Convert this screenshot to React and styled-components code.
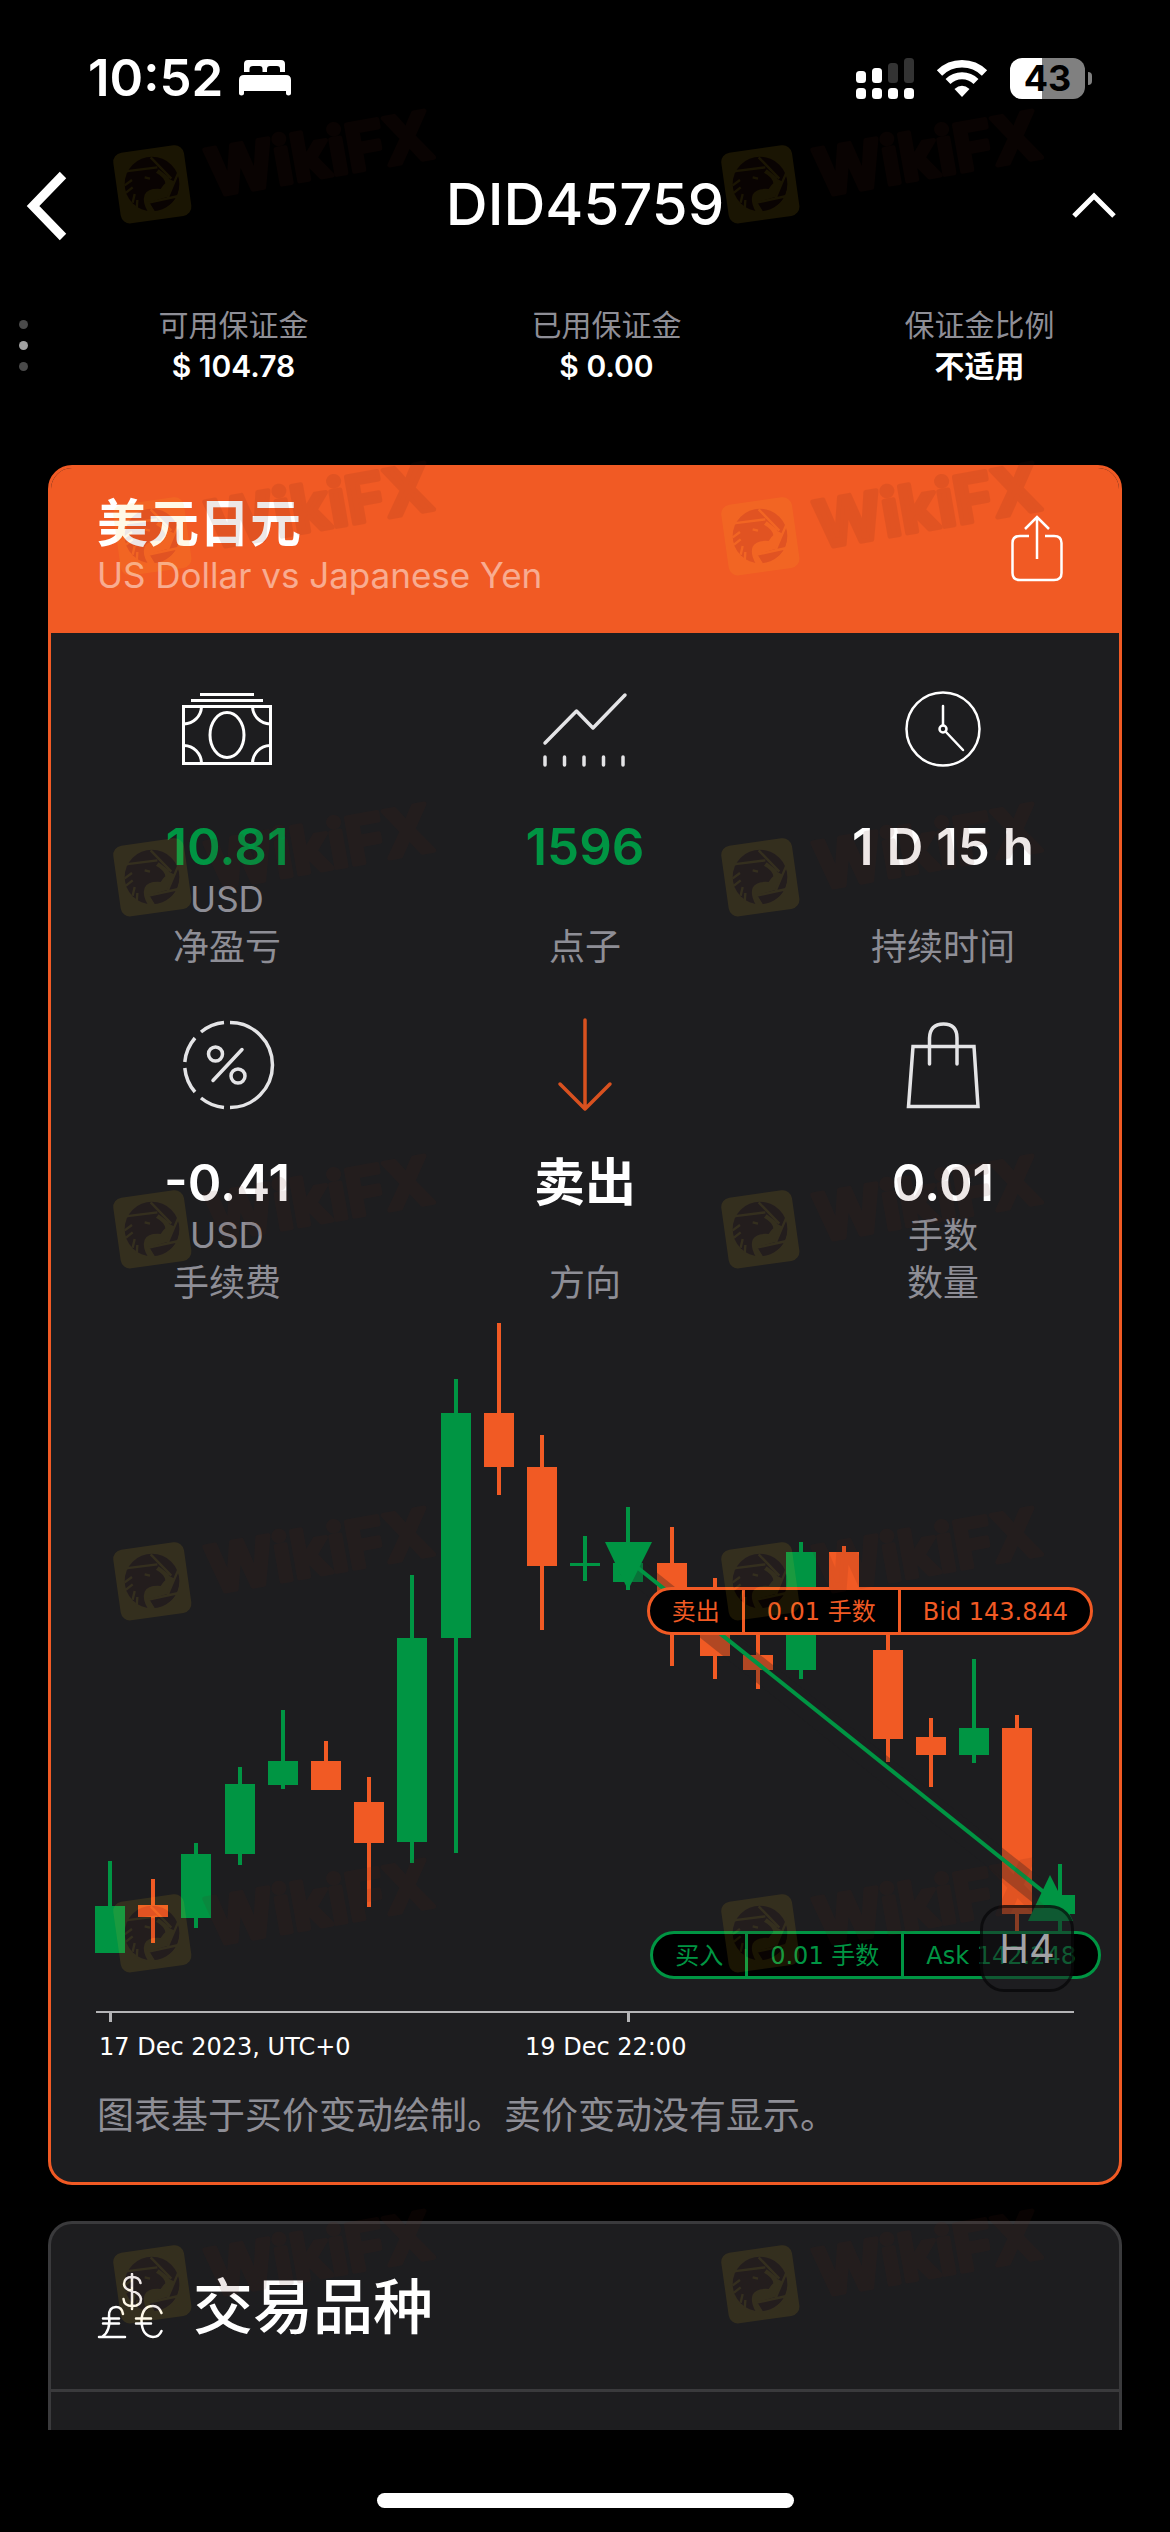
import React from "react";
import styled, { createGlobalStyle } from "styled-components";

const GREEN = "#009543";
const ORANGE = "#f15a24";
const PANEL = "#1d1d1f";
const GREY = "#8e8e96";
const LINE = "#3a3a3c";

const GlobalStyle = createGlobalStyle`
  *, *::before, *::after { box-sizing: border-box; }
  body { margin: 0; background: #000; }
  button { border: 0; padding: 0; background: none; color: inherit; font: inherit; cursor: pointer; }
  svg { display: block; }
  p, h1, h2, dl, dd { margin: 0; }
`;

const Page = styled.div`
  position: relative;
  display: flex;
  flex-direction: column;
  min-height: 100vh;
  overflow: hidden;
  background: #000;
  color: #fff;
  font-family: Inter, "Noto Sans CJK SC", sans-serif;
`;

const StatusBar = styled.div`
  display: flex;
  align-items: center;
  justify-content: space-between;
  padding: 48px 78px 38px 88px;
`;

const StatusGroup = styled.div`
  display: flex;
  align-items: center;
  gap: ${(p) => p.$gap}px;
  height: 60px;
`;

const Clock = styled.time`
  font-size: 51px;
  font-weight: 600;
  line-height: 60px;
`;

const Battery = styled.div`
  display: flex;
  align-items: center;
  gap: 3px;
`;

const BatteryCell = styled.div`
  width: 75px;
  height: 41px;
  border-radius: 12px;
  background: linear-gradient(90deg, #fff 43%, #808080 43%);
  color: #000;
  font-size: 36px;
  font-weight: 700;
  line-height: 41px;
  text-align: center;
`;

const BatteryTip = styled.span`
  width: 4px;
  height: 13px;
  border-radius: 0 6px 6px 0;
  background: #808080;
`;

const NavBar = styled.header`
  display: grid;
  grid-template-columns: 100px 1fr 100px;
  align-items: center;
  height: 120px;
  padding: 0 22px;
`;

const NavButton = styled.button`
  justify-self: ${(p) => p.$side};
  padding-right: ${(p) => (p.$side === "end" ? 30 : 0)}px;
`;

const NavTitle = styled.h1`
  padding-bottom: 4px;
  font-size: 58px;
  font-weight: 500;
  line-height: 72px;
  text-align: center;
`;

const Summary = styled.section`
  display: flex;
  padding: 38px 4px 79px 0;
`;

const Dots = styled.div`
  display: flex;
  flex-direction: column;
  align-items: center;
  gap: 12px;
  width: 47px;
  padding-top: 16px;
`;

const Dot = styled.span`
  width: 9px;
  height: 9px;
  border-radius: 50%;
  background: ${(p) => (p.$active ? "#a0a0a0" : "#4a4a4a")};
`;

const SummaryList = styled.dl`
  display: grid;
  flex: 1;
  grid-template-columns: repeat(3, 1fr);
  text-align: center;
`;

const SummaryLabel = styled.dt`
  color: ${GREY};
  font-size: 30px;
  line-height: 42px;
`;

const SummaryValue = styled.dd`
  font-size: 30px;
  font-weight: 600;
  line-height: 40px;
`;

const Card = styled.section`
  margin: 0 48px;
  overflow: hidden;
  border: 3px solid ${(p) => p.$color};
  border-bottom-width: ${(p) => (p.$open ? 0 : 3)}px;
  border-radius: ${(p) => (p.$open ? "24px 24px 0 0" : "24px")};
  background: ${PANEL};
`;

const CardHeader = styled.div`
  display: flex;
  justify-content: space-between;
  padding: 27px 56px 36px 46px;
  background: ${ORANGE};
`;

const CardTitle = styled.h2`
  font-size: 51px;
  font-weight: 700;
  line-height: 58px;
`;

const CardSubtitle = styled.p`
  color: rgba(255, 255, 255, 0.5);
  font-size: 35px;
  line-height: 44px;
`;

const ShareButton = styled.button`
  align-self: flex-start;
  padding-top: 19px;
`;

const Stats = styled.dl`
  display: grid;
  grid-template-columns: repeat(3, 1fr);
  row-gap: 44px;
  margin: 0 -3px;
  padding-top: 46px;
`;

const Stat = styled.div`
  display: flex;
  flex-direction: column;
  align-items: center;
  text-align: center;
`;

const StatIcon = styled.div`
  height: 100px;
  margin-bottom: 40px;
`;

const StatValue = styled.dd`
  color: ${(p) => p.$color || "#fff"};
  font-size: 51px;
  font-weight: 600;
  line-height: 56px;
`;

const StatNote = styled.dd`
  height: 48px;
  color: ${GREY};
  font-size: 35px;
  line-height: 48px;
`;

const StatLabel = styled.dt`
  order: 1;
  color: ${GREY};
  font-size: 36px;
  line-height: 48px;
`;

const ChartArea = styled.div`
  position: relative;

  & > svg { width: 100%; height: auto; }
`;

const OrderPill = styled.div`
  position: absolute;
  top: ${(p) => p.$top}px;
  right: ${(p) => p.$right}px;
  display: flex;
  height: 48px;
  overflow: hidden;
  border: 3px solid ${(p) => p.$color};
  border-radius: 24px;
  background: #000;
  color: ${(p) => p.$color};
  font-family: "DejaVu Sans", "Noto Sans CJK SC", sans-serif;
  font-size: 24px;
  line-height: 44px;
  white-space: nowrap;
`;

const PillPart = styled.span`
  padding: 0 22px;

  & + & { border-left: 3px solid currentColor; }
`;

const PeriodButton = styled.button`
  position: absolute;
  top: 598px;
  right: 45px;
  width: 94px;
  height: 87px;
  border: 3px solid rgba(0, 0, 0, 0.55);
  border-radius: 24px;
  background: rgba(29, 29, 33, 0.5);
  color: #a2a2a6;
  font-size: 40px;
`;

const ChartNote = styled.p`
  padding: 0 46px 42px;
  color: ${GREY};
  font-size: 37px;
  line-height: 48px;
`;

const SymbolHeader = styled.div`
  display: flex;
  align-items: center;
  gap: 28px;
  height: 168px;
  padding: 0 46px;
  border-bottom: 3px solid ${LINE};
`;

const SymbolTitle = styled.h2`
  font-size: 60px;
  font-weight: 500;
  line-height: 72px;
`;

const SymbolBody = styled.div`
  height: 38px;
`;

const Spacer = styled.div`
  height: 36px;
`;

const Footer = styled.footer`
  display: flex;
  justify-content: center;
  margin-top: auto;
  padding: 63px 0 24px;
`;

const HomeIndicator = styled.span`
  width: 417px;
  height: 15px;
  border-radius: 8px;
  background: #fff;
`;

const WatermarkLayer = styled.div`
  position: absolute;
  inset: 0;
  overflow: hidden;
  pointer-events: none;
`;

const WatermarkTile = styled.svg`
  position: absolute;
  left: ${(p) => p.$x}px;
  top: ${(p) => p.$y}px;
  overflow: visible;
`;

const watermarkRows = [100, 452, 793, 1145, 1497, 1849, 2200];
const watermarkColumns = [100, 708];

function Watermark({ x, y }) {
  return (
    <WatermarkTile $x={x} $y={y} width="350" height="140" viewBox="0 0 1050 420">
      <g opacity="0.1">
        <rect x="50" y="146" width="214" height="214" rx="28" fill="#ffc81e" transform="rotate(-8 157 253)" />
        <circle cx="156" cy="252" r="82" fill="#5a1e14" />
        <path
          d="M176 208 L214 238 L224 244 L200 294 L146 306 L164 336 L144 336 Q126 306 134 284 Q144 264 182 267 L190 256 L196 250 Q194 232 168 218 Z"
          fill="#ffc81e"
        />
        <path
          d="M206 236L226 246L204 290L150 306L168 330Q220 322 234 276Q240 250 230 220Z"
          fill="#5a1e14"
        />
        <path
          d="M76 214 L172 202 M152 172 L214 236 M240 206 L202 296 M236 288 L146 308 M134 232 L150 236 M74 256 L96 240 M78 278 L98 262 M98 308 L104 282 M110 330 L112 300 M142 304 L162 336"
          stroke="#ffc81e"
          strokeWidth="7"
          fill="none"
        />
        <text
          x="334"
          y="290"
          transform="rotate(-10 334 290)"
          fontFamily="Inter, sans-serif"
          fontSize="196"
          fontWeight="700"
          fill="#5a1e14"
          stroke="#5a1e14"
          strokeWidth="14"
          strokeLinejoin="round"
        >
          WikiFX
        </text>
      </g>
    </WatermarkTile>
  );
}

const BedIcon = () => (
  <svg width="52" height="36" viewBox="0 0 52 36" fill="#fff" aria-hidden="true">
    <path d="M5 12V4Q5 0 9 0H42Q46 0 46 4V12H41V9Q41 6 38 6H31Q28 6 28 9V12H23.500V9Q23.500 6 20.500 6H14Q10.500 6 10.500 9V12Z" />
    <path d="M0 20Q0 15 5 15H47Q52 15 52 20V33.500Q52 35.500 49.500 35.500Q47 35.500 47 33.500V31H5V33.500Q5 35.500 2.500 35.500Q0 35.500 0 33.500Z" />
  </svg>
);

const SignalIcon = () => (
  <svg width="58" height="41" viewBox="0 0 58 41" aria-hidden="true">
    {[0, 16, 32, 48].map((x, i) => (
      <g key={x}>
        <rect x={x} y={[13, 10, 5, 0][i]} width="10" height={[12, 15, 20, 25][i]} rx="3.500" fill={i < 2 ? "#fff" : "#333"} />
        <rect x={x} y="30" width="10" height="11" rx="3.500" fill="#fff" />
      </g>
    ))}
  </svg>
);

const WifiIcon = () => (
  <svg width="52" height="38" viewBox="0 0 52 38" aria-hidden="true">
    <path d="M3.500 14 A32 32 0 0 1 48.500 14" fill="none" stroke="#fff" strokeWidth="7.500" />
    <path d="M12 22.500 A20 20 0 0 1 40 22.500" fill="none" stroke="#fff" strokeWidth="7" />
    <path d="M26 38 L18.500 30 Q26 23.500 33.500 30 Z" fill="#fff" />
  </svg>
);

const BackIcon = () => (
  <svg width="48" height="72" viewBox="0 0 48 72" fill="none" stroke="#fff" strokeWidth="9" aria-hidden="true">
    <path d="M41 5 L11 36 L41 67" />
  </svg>
);

const UpIcon = () => (
  <svg width="48" height="30" viewBox="0 0 48 30" fill="none" stroke="#fff" strokeWidth="5" aria-hidden="true">
    <path d="M4 25 L24 5 L44 25" />
  </svg>
);

const ShareIcon = () => (
  <svg width="52" height="68" viewBox="0 0 52 68" fill="none" stroke="#fff" strokeWidth="2.500" aria-hidden="true">
    <path d="M18 22H9Q1.500 22 1.500 29V59Q1.500 66 9 66H43Q50.500 66 50.500 59V29Q50.500 22 43 22H34" />
    <path d="M26 45V3M14 15L26 3L38 15" />
  </svg>
);

const IconFrame = ({ children, stroke = "#e4e4e6", width = 3.5 }) => (
  <svg width="100" height="100" viewBox="0 0 100 100" fill="none" stroke={stroke} strokeWidth={width} strokeLinecap="round" strokeLinejoin="round" aria-hidden="true">
    {children}
  </svg>
);

const CashIcon = () => (
  <IconFrame stroke="#fff" width={3}>
    <g strokeLinecap="butt" strokeLinejoin="miter">
      <path d="M23 15.500H77M14 21.500H86" />
      <rect x="6.500" y="27.500" width="87" height="57" />
      <ellipse cx="50" cy="56" rx="17" ry="22.500" />
      <path d="M24.500 28A18 18 0 0 1 7 45M75.500 28A18 18 0 0 0 93 45M7 66.500A18 18 0 0 1 24.500 84M93 66.500A18 18 0 0 0 75.500 84" />
    </g>
  </IconFrame>
);

const TrendIcon = () => (
  <IconFrame>
    <path d="M10 64L41.500 32L58 49L90 16" />
    <path d="M10 78V86M29.500 78V86M49 78V86M68.500 78V86M88 78V86" />
  </IconFrame>
);

const ClockIcon = () => (
  <IconFrame stroke="#fff" width={2.5}>
    <circle cx="50" cy="50" r="36.500" />
    <circle cx="50" cy="50" r="3.500" />
    <path d="M50 46V27M52.500 52.500L70 71" />
  </IconFrame>
);

const PercentIcon = () => (
  <IconFrame>
    <path d="M53 7.500A42.500 42.500 0 0 1 53 92.500M47 92.500A42.500 42.500 0 0 1 24 83M18 77A42.500 42.500 0 0 1 7.800 53M7.800 47A42.500 42.500 0 0 1 18 23M24 17A42.500 42.500 0 0 1 47 7.500" strokeLinecap="butt" />
    <circle cx="38.500" cy="39" r="7" />
    <circle cx="61" cy="61" r="7" />
    <path d="M65 34.500L36 65.500" />
  </IconFrame>
);

const DownIcon = () => (
  <IconFrame stroke="#d8511f">
    <path d="M50 5V94M25 69L50 94L75 69" />
  </IconFrame>
);

const BagIcon = () => (
  <IconFrame>
    <path d="M20 31.500H81L85 91.500H15.500Z" strokeLinejoin="miter" />
    <path d="M36.500 49V23Q37 9 50.500 9T64 23V49" />
  </IconFrame>
);

const CurrencyIcon = () => (
  <svg width="68" height="68" viewBox="0 0 68 68" fill="none" stroke="#fff" strokeWidth="2.500" strokeLinecap="round" aria-hidden="true">
    <path d="M35 1V36M43.500 10Q42.500 4 35 4T27 11Q27 16 35 18T44 26Q44 33 35.500 33T26.500 26" />
    <path d="M26 41Q25 34 19 34Q12 34 12 43Q14 58 5 64M6 45.500H22M6 50.500H22M2 64H28" />
    <path d="M64.500 40Q62 33 56 33Q45 33 44.500 48Q45 63 56 64Q62 64 64.500 58M39 45.500H54M39 50.500H54" />
  </svg>
);

const summary = [
  ["可用保证金", "$ 104.78"],
  ["已用保证金", "$ 0.00"],
  ["保证金比例", "不适用"],
];

const stats = [
  { icon: CashIcon, value: "10.81", note: "USD", label: "净盈亏", color: GREEN },
  { icon: TrendIcon, value: "1596", note: "", label: "点子", color: GREEN },
  { icon: ClockIcon, value: "1 D 15 h", note: "", label: "持续时间" },
  { icon: PercentIcon, value: "-0.41", note: "USD", label: "手续费" },
  { icon: DownIcon, value: "卖出", note: "", label: "方向" },
  { icon: BagIcon, value: "0.01", note: "手数", label: "数量" },
];

// [rising, high, body top, body bottom, low]
const candles = [
  [1, 554, 599, 646, 646],
  [0, 572, 598, 610, 636],
  [1, 536, 547, 611, 621],
  [1, 460, 477, 547, 558],
  [1, 403, 454, 478, 482],
  [0, 434, 454, 483, 483],
  [0, 470, 495, 536, 600],
  [1, 268, 331, 535, 556],
  [1, 72, 106, 331, 546],
  [0, 16, 106, 160, 188],
  [0, 128, 160, 259, 323],
  [1, 229, 256, 259, 274],
  [1, 200, 256, 275, 283],
  [0, 220, 256, 300, 359],
  [0, 271, 290, 349, 372],
  [0, 300, 348, 363, 382],
  [1, 235, 245, 363, 372],
  [0, 239, 245, 310, 310],
  [0, 310, 343, 432, 455],
  [0, 411, 430, 448, 480],
  [1, 352, 421, 448, 456],
  [0, 408, 421, 607, 624],
  [1, 557, 588, 607, 624],
];

function CandleChart() {
  return (
    <svg viewBox="0 0 1068 785" role="img" aria-label="USD/JPY H4">
      {candles.map(([up, high, top, bottom, low], i) => {
        const cx = Math.round(59 + i * 43.2);
        return (
          <g key={i} fill={up ? GREEN : ORANGE}>
            <rect x={cx - 2} y={high} width="4" height={low - high} />
            <rect x={cx - 15} y={top} width="30" height={bottom - top} />
          </g>
        );
      })}
      <path d="M577 258L999 594" stroke="rgba(29,29,33,0.3)" strokeWidth="24" />
      <path d="M577 253L999 590" stroke={GREEN} strokeWidth="4" />
      <path d="M554 235H601L577 283Z" fill={GREEN} />
      <path d="M977 614H1022L999 568Z" fill={GREEN} />
      <path d="M45 705H1023" stroke="#b4b4b6" strokeWidth="2" />
      <path d="M59.500 705V715M577.500 705V715" stroke="#b4b4b6" strokeWidth="3" />
      <g fill="#fff" fontFamily="DejaVu Sans, sans-serif" fontSize="24">
        <text x="48" y="748">17 Dec 2023, UTC+0</text>
        <text x="474" y="748">19 Dec 22:00</text>
      </g>
    </svg>
  );
}

export default function App() {
  return (
    <Page>
      <GlobalStyle />
      <StatusBar>
        <StatusGroup $gap={16}>
          <Clock>10:52</Clock>
          <BedIcon />
        </StatusGroup>
        <StatusGroup $gap={22}>
          <SignalIcon />
          <WifiIcon />
          <Battery>
            <BatteryCell>43</BatteryCell>
            <BatteryTip />
          </Battery>
        </StatusGroup>
      </StatusBar>

      <NavBar>
        <NavButton $side="start" aria-label="返回"><BackIcon /></NavButton>
        <NavTitle>DID45759</NavTitle>
        <NavButton $side="end" aria-label="收起"><UpIcon /></NavButton>
      </NavBar>

      <Summary>
        <Dots>
          <Dot />
          <Dot $active />
          <Dot />
        </Dots>
        <SummaryList>
          {summary.map(([label, value]) => (
            <div key={label}>
              <SummaryLabel>{label}</SummaryLabel>
              <SummaryValue>{value}</SummaryValue>
            </div>
          ))}
        </SummaryList>
      </Summary>

      <Card $color={ORANGE}>
        <CardHeader>
          <div>
            <CardTitle>美元日元</CardTitle>
            <CardSubtitle>US Dollar vs Japanese Yen</CardSubtitle>
          </div>
          <ShareButton aria-label="分享"><ShareIcon /></ShareButton>
        </CardHeader>
        <Stats>
          {stats.map(({ icon: Icon, value, note, label, color }) => (
            <Stat key={label}>
              <StatIcon><Icon /></StatIcon>
              <StatLabel>{label}</StatLabel>
              <StatValue $color={color}>{value}</StatValue>
              <StatNote>{note}</StatNote>
            </Stat>
          ))}
        </Stats>
        <ChartArea>
          <CandleChart />
          <OrderPill $top={280} $right={26} $color={ORANGE}>
            <PillPart>卖出</PillPart>
            <PillPart>0.01 手数</PillPart>
            <PillPart>Bid 143.844</PillPart>
          </OrderPill>
          <OrderPill $top={624} $right={18} $color={GREEN}>
            <PillPart>买入</PillPart>
            <PillPart>0.01 手数</PillPart>
            <PillPart>Ask 142.248</PillPart>
          </OrderPill>
          <PeriodButton>H4</PeriodButton>
        </ChartArea>
        <ChartNote>图表基于买价变动绘制。卖价变动没有显示。</ChartNote>
      </Card>

      <Spacer />

      <Card $color={LINE} $open>
        <SymbolHeader>
          <CurrencyIcon />
          <SymbolTitle>交易品种</SymbolTitle>
        </SymbolHeader>
        <SymbolBody />
      </Card>

      <Footer>
        <HomeIndicator />
      </Footer>

      <WatermarkLayer aria-hidden="true">
        {watermarkRows.map((y) =>
          watermarkColumns.map((x) => <Watermark key={`${x}-${y}`} x={x} y={y} />)
        )}
      </WatermarkLayer>
    </Page>
  );
}
